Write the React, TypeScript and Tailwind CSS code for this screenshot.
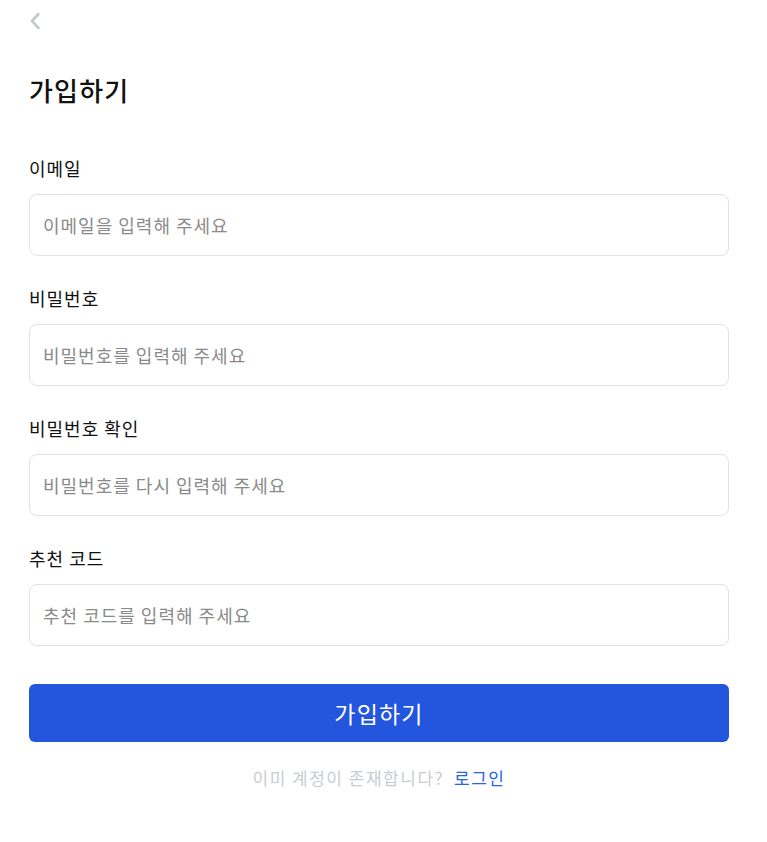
import React from "react";

const fields = [
  { label: "이메일", placeholder: "이메일을 입력해 주세요", type: "email" },
  { label: "비밀번호", placeholder: "비밀번호를 입력해 주세요", type: "password" },
  { label: "비밀번호 확인", placeholder: "비밀번호를 다시 입력해 주세요", type: "password" },
  { label: "추천 코드", placeholder: "추천 코드를 입력해 주세요", type: "text" },
];

export default function App() {
  return (
    <div
      className="min-h-screen bg-white px-[29px] pt-[11px]"
      style={{ fontFamily: '"Noto Sans CJK KR", "Noto Sans", sans-serif' }}
    >
      <div className="w-[700px]">
        <button className="flex h-[20px] w-[14px] items-center text-[#c3c8d2]">
          <svg width="12" height="18" viewBox="0 0 12 18" fill="none">
            <path
              d="M9.5 2L3 9l6.5 7"
              stroke="currentColor"
              strokeWidth="2.6"
              strokeLinecap="round"
              strokeLinejoin="round"
            />
          </svg>
        </button>

        <h1 className="mt-[41px] text-[26px] font-medium leading-[36px] tracking-[1.2px] text-[#111]">
          가입하기
        </h1>

        <form className="mt-[47px] flex flex-col gap-[29px]">
          {fields.map((f) => (
            <label key={f.label} className="flex flex-col gap-[13px]">
              <span className="text-[18px] leading-[26px] tracking-[1px] text-[#111]">
                {f.label}
              </span>
              <input
                type={f.type}
                placeholder={f.placeholder}
                className="h-[62px] w-full rounded-[8px] border border-[#e2e2e2] px-[13px] text-[18px] tracking-[1px] text-[#333] placeholder:text-[#8a8a8a] focus:outline-none"
              />
            </label>
          ))}
        </form>

        <button className="mt-[38px] h-[58px] w-full rounded-[6px] bg-[#2355de] text-[23px] tracking-[1.2px] text-white">
          가입하기
        </button>

        <div className="mt-[24px] flex items-center justify-center gap-[10px] text-[17px] leading-[24px] tracking-[1.5px]">
          <span className="text-[#c8ccd4]">이미 계정이 존재합니다?</span>
          <a className="text-[#2563eb]" href="#">
            로그인
          </a>
        </div>
      </div>
    </div>
  );
}
